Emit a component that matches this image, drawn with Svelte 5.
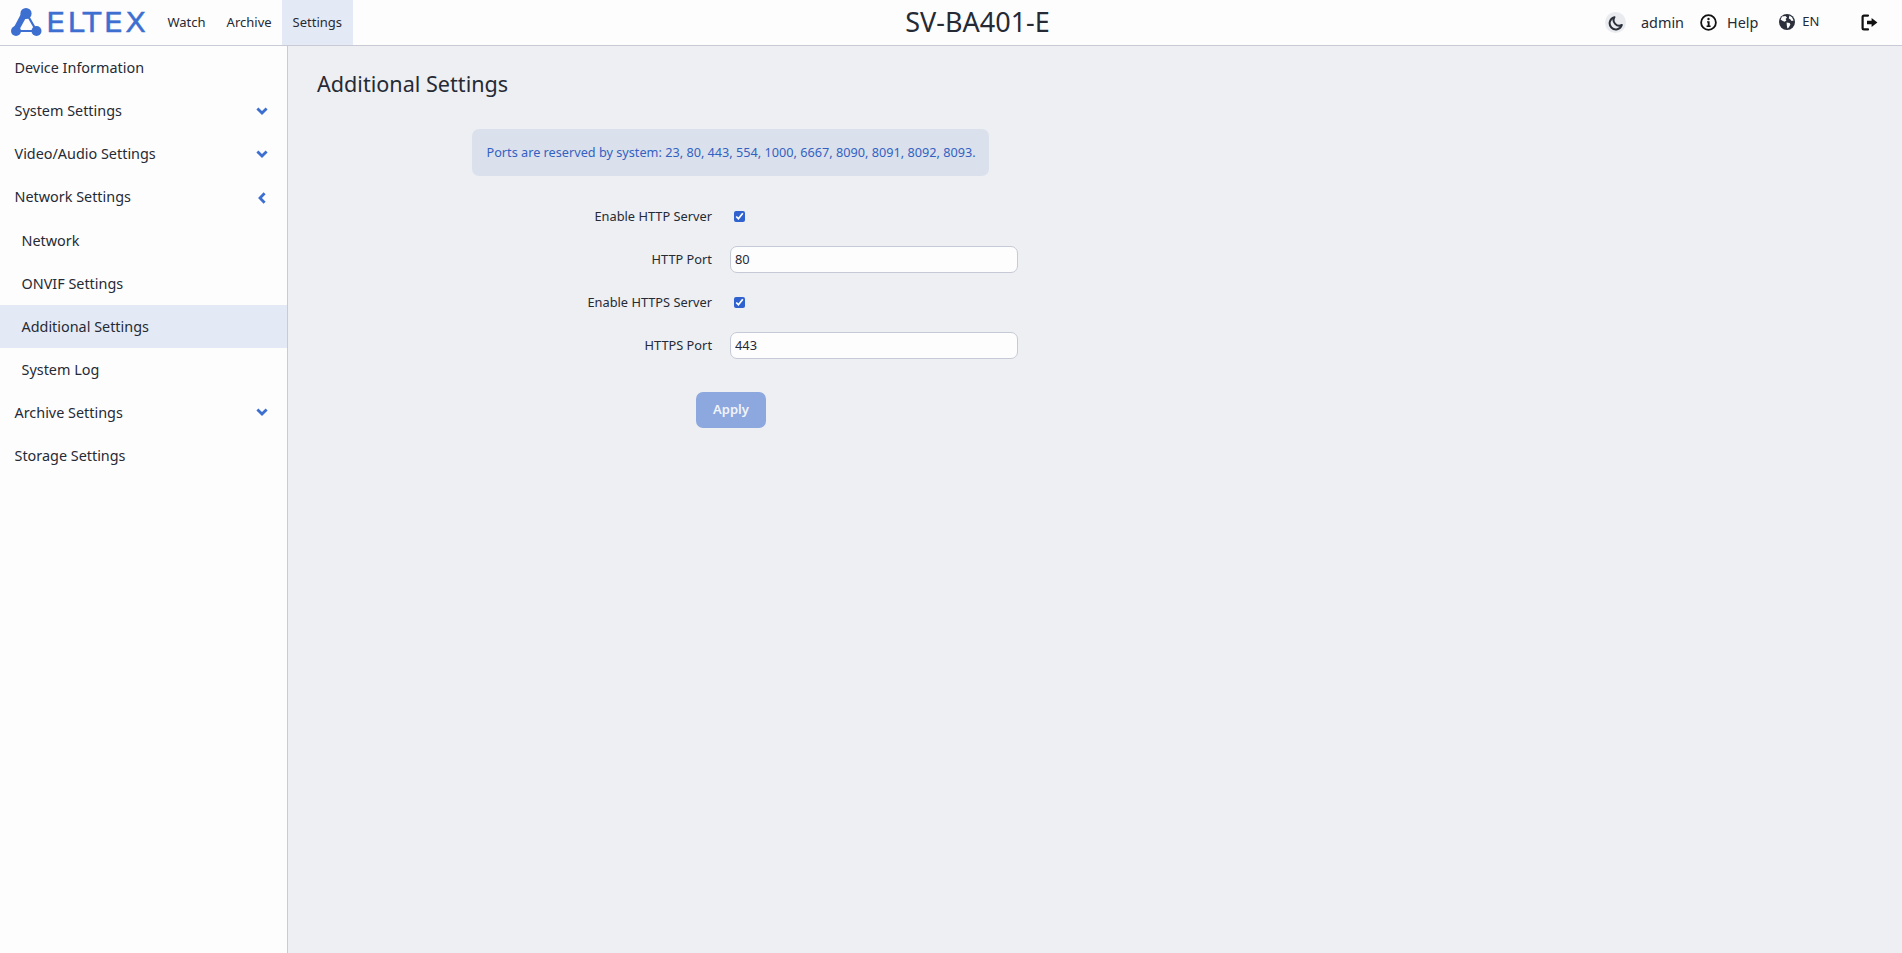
<script>
  const groups = [
    { label: 'Device Information' },
    { label: 'System Settings', chevron: 'down' },
    { label: 'Video/Audio Settings', chevron: 'down' },
    { label: 'Network Settings', chevron: 'left' },
    { label: 'Network', sub: true },
    { label: 'ONVIF Settings', sub: true },
    { label: 'Additional Settings', sub: true, active: true },
    { label: 'System Log', sub: true },
    { label: 'Archive Settings', chevron: 'down' },
    { label: 'Storage Settings' }
  ];
</script>

<div class="page">
  <header class="topbar">
    <div class="left">
      <div class="logo">
        <svg width="46" height="38" viewBox="0 0 46 38" aria-hidden="true">
          <g fill="#3d6fd1" stroke="none">
            <path d="M22.5 11 L13 29 L18 32 L27.5 15 Z" />
            <circle cx="26" cy="13.5" r="5.6" />
            <circle cx="16" cy="31" r="5" />
            <circle cx="36.5" cy="31" r="5" />
          </g>
          <path d="M28 16 L36 30 M17 31 H36" fill="none" stroke="#3d6fd1" stroke-width="2.2" />
        </svg>
        <span class="wordmark">ELTEX</span>
      </div>
      <nav class="tabs">
        <span class="tab">Watch</span>
        <span class="tab">Archive</span>
        <span class="tab current">Settings</span>
      </nav>
    </div>
    <div class="device">SV-BA401-E</div>
    <div class="right">
      <span class="moon">
        <svg width="16" height="16" viewBox="0 0 16 16" aria-hidden="true">
          <path d="M6.4 2.2 A6.2 6.2 0 1 0 13.8 10 A5.6 5.6 0 0 1 6.4 2.2 Z" fill="none" stroke="#2b303b" stroke-width="2" stroke-linejoin="round" />
        </svg>
      </span>
      <span class="user">admin</span>
      <svg class="info" width="17" height="17" viewBox="0 0 17 17" aria-hidden="true">
        <circle cx="8.5" cy="8.5" r="7.4" fill="none" stroke="#111" stroke-width="1.8" />
        <circle cx="8.5" cy="5" r="1.2" fill="#111" />
        <path d="M7 7.2 H9.6 V11.6 H10.6 V13 H6.6 V11.6 H7.7 V8.6 H7 Z" fill="#111" />
      </svg>
      <span class="help">Help</span>
      <svg class="globe" width="16" height="16" viewBox="0 0 16 16" aria-hidden="true">
        <circle cx="8" cy="8" r="8" fill="#2b303b" />
        <path d="M3 2.6 L6.5 2 L8 3.4 L6.6 5 L7.4 6.4 L5.6 7.8 L3.4 6.8 L1.6 5.6 Z M7.6 8.6 L10.6 9 L11.4 10.6 L9.8 13.6 L8.4 14.4 L7.8 11.6 Z M10.4 1.6 L13 3.2 L14.6 6.4 L12.6 7 L11.2 5.2 L9.8 4.4 Z" fill="#fdfdfd" />
      </svg>
      <span class="lang">EN</span>
      <svg class="logout" width="17" height="17" viewBox="0 0 17 17" aria-hidden="true">
        <path d="M7 1.6 H3 Q1.6 1.6 1.6 3 V14 Q1.6 15.4 3 15.4 H7" fill="none" stroke="#111" stroke-width="2.2" stroke-linecap="round" />
        <path d="M6 6.8 H10.6 V4 L16.4 8.5 L10.6 13 V10.2 H6 Z" fill="#111" />
      </svg>
    </div>
  </header>

  <div class="body">
    <aside class="sidebar">
      {#each groups as g}
        <div class="item" class:sub={g.sub} class:active={g.active}>
          <span class="item-label">{g.label}</span>
          {#if g.chevron === 'down'}
            <svg class="chev-down" width="12" height="8" viewBox="0 0 12 8" aria-hidden="true">
              <path d="M1.4 1.4 L6 6 L10.6 1.4" fill="none" stroke="#3d6fd1" stroke-width="2.8" />
            </svg>
          {:else if g.chevron === 'left'}
            <svg class="chev-left" width="8" height="12" viewBox="0 0 8 12" aria-hidden="true">
              <path d="M6.6 1.2 L2 6 L6.6 10.8" fill="none" stroke="#3d6fd1" stroke-width="2.8" />
            </svg>
          {/if}
        </div>
      {/each}
    </aside>

    <main class="main">
      <h1>Additional Settings</h1>
      <div class="alert"><span>Ports are reserved by system: 23, 80, 443, 554, 1000, 6667, 8090, 8091, 8092, 8093.</span></div>
      <form class="form">
        <label class="row">
          <span class="lbl">Enable HTTP Server</span>
          <input type="checkbox" checked />
        </label>
        <label class="row">
          <span class="lbl">HTTP Port</span>
          <input class="text" type="text" value="80" />
        </label>
        <label class="row">
          <span class="lbl">Enable HTTPS Server</span>
          <input type="checkbox" checked />
        </label>
        <label class="row">
          <span class="lbl">HTTPS Port</span>
          <input class="text" type="text" value="443" />
        </label>
        <button class="apply" type="button">Apply</button>
      </form>
    </main>
  </div>
</div>

<style>
  :global(body) {
    margin: 0;
    font-family: "Noto Sans", "Open Sans", sans-serif;
    color: #262a35;
  }
  .page {
    height: 953px;
    display: flex;
    flex-direction: column;
    overflow: hidden;
    background: #edeff2;
  }
  .topbar {
    height: 45px;
    flex: none;
    display: flex;
    align-items: stretch;
    background: #fdfdfd;
    border-bottom: 1px solid #c8cbd6;
  }
  .left {
    display: flex;
    width: 351px;
    flex: none;
  }
  .logo {
    display: flex;
    align-items: flex-start;
    width: 157px;
    flex: none;
  }
  .logo svg {
    margin: 0;
    flex: none;
  }
  .wordmark {
    font-family: "DejaVu Sans", sans-serif;
    font-size: 27px;
    line-height: 45px;
    letter-spacing: 2.2px;
    color: #3d6fd1;
    -webkit-text-stroke: 0.4px #3d6fd1;
    transform: scaleX(1.12);
    transform-origin: left center;
  }
  .tabs {
    display: flex;
  }
  .tab {
    padding: 0 10.5px;
    font-size: 13px;
    line-height: 45px;
  }
  .tab.current {
    background: #e4eaf5;
  }
  .device {
    flex: 1;
    text-align: center;
    font-size: 27px;
    line-height: 44px;
    padding-left: 4px;
  }
  .right {
    width: 302px;
    flex: none;
    display: flex;
    align-items: center;
    padding-left: 5px;
    box-sizing: border-box;
  }
  .moon {
    width: 21px;
    height: 21px;
    border-radius: 50%;
    background: #e9ebef;
    display: flex;
    align-items: center;
    justify-content: center;
    margin-right: 15px;
    flex: none;
  }
  .user {
    font-size: 14.4px;
    margin-right: 16px;
  }
  .info {
    flex: none;
    margin-right: 10px;
  }
  .help {
    font-size: 14.4px;
    margin-right: 21px;
  }
  .globe {
    flex: none;
    margin-right: 7px;
    margin-top: -2px;
  }
  .lang {
    font-size: 13px;
    margin-top: -4px;
    margin-right: 42px;
  }
  .logout {
    flex: none;
  }
  .body {
    flex: 1;
    display: flex;
    min-height: 0;
  }
  .sidebar {
    width: 287px;
    flex: none;
    background: #fdfdfd;
    border-right: 1px solid #c8cbd6;
    padding-top: 1px;
  }
  .item {
    height: 43px;
    display: flex;
    align-items: center;
    justify-content: space-between;
    padding: 0 19px 0 14.5px;
    font-size: 14.4px;
  }
  .item-label {
    margin-top: -1px;
  }
  .item:nth-child(-n + 4) .item-label {
    margin-top: -3px;
  }
  .item.sub {
    padding-left: 21.5px;
  }
  .item.active {
    background: #e4eaf5;
  }
  .chev-down {
    margin-top: -2px;
  }
  .chev-left {
    margin-right: 2px;
  }
  .main {
    flex: 1;
    padding: 0 0 0 29px;
  }
  h1 {
    font-size: 21.6px;
    font-weight: 400;
    line-height: 27px;
    margin: 24px 0 0;
  }
  .alert {
    margin: 32px 0 0 155px;
    width: 517px;
    height: 47px;
    box-sizing: border-box;
    padding: 0 14.5px 1px;
    display: flex;
    align-items: center;
    white-space: nowrap;
    border-radius: 7px;
    background: #dbe1ec;
    color: #3361c2;
    font-size: 12.7px;
  }
  .form {
    margin: 19px 0 0 0;
    display: flex;
    flex-direction: column;
  }
  .row {
    height: 43px;
    display: flex;
    align-items: center;
  }
  .lbl {
    width: 395px;
    flex: none;
    text-align: right;
    font-size: 12.8px;
    margin-right: 18px;
    padding-bottom: 2px;
  }
  input[type='checkbox'] {
    width: 11px;
    height: 11px;
    margin: 0 0 0 4px;
    accent-color: #2f62cf;
  }
  .text {
    width: 288px;
    height: 27px;
    box-sizing: border-box;
    border: 1px solid #c6cad6;
    border-radius: 7px;
    background: #fdfdfd;
    padding: 0 4px 2px;
    margin: 0;
    font: 12.8px "Noto Sans", sans-serif;
    color: #262a35;
    outline: none;
  }
  .apply {
    margin: 25px 0 0 379px;
    width: 70px;
    height: 36px;
    border: 0;
    border-radius: 7px;
    background: #8da8de;
    color: #f1f4fb;
    font: 600 13px "Noto Sans", sans-serif;
    padding: 0 0 2px;
  }
</style>
